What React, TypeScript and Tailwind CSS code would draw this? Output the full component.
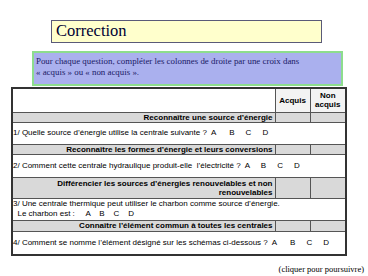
const sans = { fontFamily: '"Liberation Sans", Arial, sans-serif' };

function Section({ children, h }: { children: React.ReactNode; h: string }) {
  return (
    <tr className={`${h} bg-[#d9d9d9]`}>
      <td className="border border-[#555] py-0 pr-[2px] pl-[3px] text-right align-middle text-[8px] font-bold leading-[9px] text-black">
        {children}
      </td>
      <td className="border border-[#555]" />
      <td className="border border-[#555]" />
    </tr>
  );
}

function Question({ children, h }: { children: React.ReactNode; h: string }) {
  return (
    <tr className={`${h} bg-white`}>
      <td
        colSpan={3}
        className="border border-[#555] p-0 align-middle text-[8px] leading-[10px] whitespace-pre text-black"
      >
        {children}
      </td>
    </tr>
  );
}

export default function App() {
  return (
    <div className="h-[276px] w-[368px] overflow-hidden bg-white">
      <div className="ml-[51px] mt-[20px] flex h-[23px] w-[271px] items-center border-[1.5px] border-[#5a5a78] bg-[#ffffcc] pl-[4px]">
        <span className="font-[family-name:Liberation_Serif,serif] text-[16.5px] leading-none text-[#000033]">
          Correction
        </span>
      </div>

      <div className="ml-[32px] mt-[8px] h-[35px] w-[311px] border-2 border-[#8ddd8d] bg-[#aab0ee] px-[2px] pt-[3px] font-[family-name:Liberation_Serif,serif] text-[8.9px] leading-[11px] text-[#1a1a66]">
        Pour chaque question, compléter les colonnes de droite par une croix dans
        <br />« acquis » ou « non acquis ».
      </div>

      <table
        className="ml-[11px] mt-[1px] w-[334px] table-fixed border-collapse border-2 border-[#333]"
        style={sans}
      >
        <colgroup>
          <col className="w-[263px]" />
          <col className="w-[35px]" />
          <col className="w-[36px]" />
        </colgroup>
        <tbody>
          <tr className="h-[24px]">
            <td className="border border-[#555] bg-white" />
            <td className="border border-[#555] bg-[#f3f3f3] text-center text-[8px] font-bold leading-[9px]">
              Acquis
            </td>
            <td className="border border-[#555] bg-[#f3f3f3] text-center text-[8px] font-bold leading-[9px]">
              Non
              <br />
              acquis
            </td>
          </tr>
          <Section h="h-[10px]">Reconnaître une source d’énergie</Section>
          <Question h="h-[22px]">
            {"1/ Quelle source d’énergie utilise la centrale suivante ?  A      B     C     D"}
          </Question>
          <Section h="h-[10px]">Reconnaître les formes d’énergie et leurs conversions</Section>
          <Question h="h-[23px]">
            {"2/ Comment cette centrale hydraulique produit-elle  l’électricité ?  A     B     C     D"}
          </Question>
          <Section h="h-[21px]">
            Différencier les sources d’énergies renouvelables et non
            <br />
            renouvelables
          </Section>
          <Question h="h-[22px]">
            {"3/ Une centrale thermique peut utiliser le charbon comme source d’énergie.\n  Le charbon est :     A    B    C    D"}
          </Question>
          <Section h="h-[11px]">Connaître l’élément commun à toutes les centrales</Section>
          <Question h="h-[24px]">
            {"4/ Comment se nomme l’élément désigné sur les schémas ci-dessous ?  A      B     C     D"}
          </Question>
        </tbody>
      </table>

      <div className="mt-[8px] pr-[4px] text-right font-[family-name:Liberation_Serif,serif] text-[8.5px] leading-[10px] text-black">
        (cliquer pour poursuivre)
      </div>
    </div>
  );
}
